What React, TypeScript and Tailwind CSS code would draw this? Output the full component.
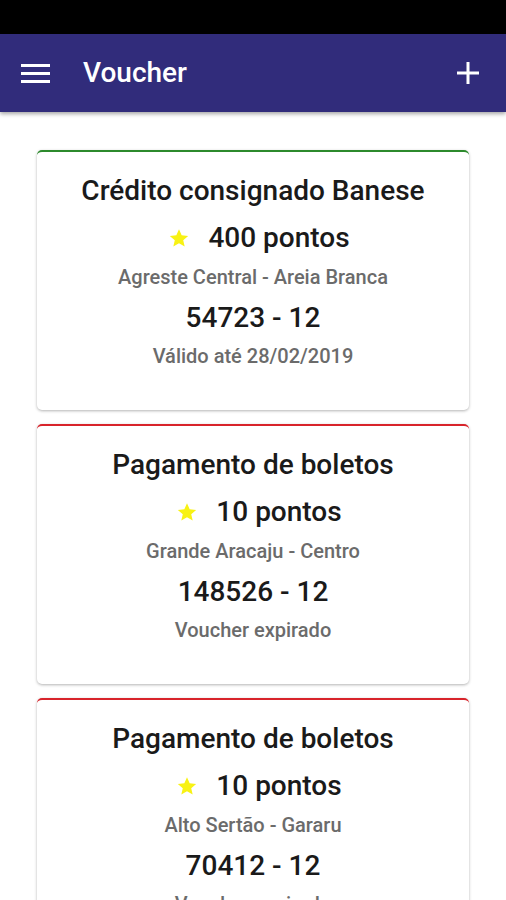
import React from 'react';

// --- Types ---
interface Voucher {
  id: number;
  titulo: string;
  pontos: number;
  local: string;
  codigo: string;
  situacao: string;
  valido: boolean;
}

// --- Dados de exemplo ---
const vouchers: Voucher[] = [
  { id: 1, titulo: 'Crédito consignado Banese', pontos: 400, local: 'Agreste Central - Areia Branca', codigo: '54723 - 12', situacao: 'Válido até 28/02/2019', valido: true },
  { id: 2, titulo: 'Pagamento de boletos', pontos: 10, local: 'Grande Aracaju - Centro', codigo: '148526 - 12', situacao: 'Voucher expirado', valido: false },
  { id: 3, titulo: 'Pagamento de boletos', pontos: 10, local: 'Alto Sertão - Gararu', codigo: '70412 - 12', situacao: 'Voucher expirado', valido: false },
];

const Star = () => (
  <svg width="22" height="22" viewBox="0 0 24 24" className="shrink-0">
    <path d="M12 2.5l2.9 6.6 7.1.6-5.4 4.7 1.6 7-6.2-3.7-6.2 3.7 1.6-7L2 9.7l7.1-.6z" fill="#f8f214" />
  </svg>
);

const VoucherCard: React.FC<{ v: Voucher }> = ({ v }) => (
  <div
    className={`bg-white rounded-[5px] border-t-2 ${v.valido ? 'border-[#2c8a2c]' : 'border-[#d8242b]'} shadow-[0_1px_3px_rgba(0,0,0,0.3)] pt-[23px] pb-[42px] text-center`}
  >
    <p className="text-[28px] leading-8 font-medium text-[#1a1a1a]">{v.titulo}</p>
    <div className="mt-[15px] pl-[12px] flex items-center justify-center gap-[18px] h-8">
      <Star />
      <span className="text-[28px] leading-8 font-medium text-[#1a1a1a]">{v.pontos} pontos</span>
    </div>
    <p className="mt-[11px] text-[20px] leading-6 font-medium text-[#6b6b6b]">{v.local}</p>
    <p className="mt-[13px] text-[28px] leading-8 font-medium text-[#1a1a1a]">{v.codigo}</p>
    <p className="mt-[10px] text-[20px] leading-6 font-medium text-[#6b6b6b]">{v.situacao}</p>
  </div>
);

const App: React.FC = () => {
  return (
    <div className="w-[506px] h-[900px] overflow-hidden bg-white font-['Roboto',sans-serif]">
      {/* barra de status */}
      <div className="h-[34px] bg-black" />

      {/* toolbar */}
      <header className="relative z-10 h-[78px] bg-[#312c7b] flex items-center pl-[21px] pr-[26px] shadow-[0_2px_4px_rgba(0,0,0,0.35)]">
        <svg width="30" height="22" viewBox="0 0 30 22" className="shrink-0">
          <rect x="0" y="2" width="29" height="3" fill="#fff" />
          <rect x="0" y="10" width="29" height="3" fill="#fff" />
          <rect x="0" y="18" width="29" height="3" fill="#fff" />
        </svg>
        <h1 className="ml-[32px] text-[28px] font-medium text-white">Voucher</h1>
        <svg width="24" height="24" viewBox="0 0 24 24" className="ml-auto">
          <path d="M12 1v22M1 12h22" stroke="#fff" strokeWidth="3" />
        </svg>
      </header>

      {/* lista */}
      <main className="px-[37px] pt-[38px] flex flex-col gap-[14px]">
        {vouchers.map((v) => (
          <VoucherCard key={v.id} v={v} />
        ))}
      </main>
    </div>
  );
};

export default App;
